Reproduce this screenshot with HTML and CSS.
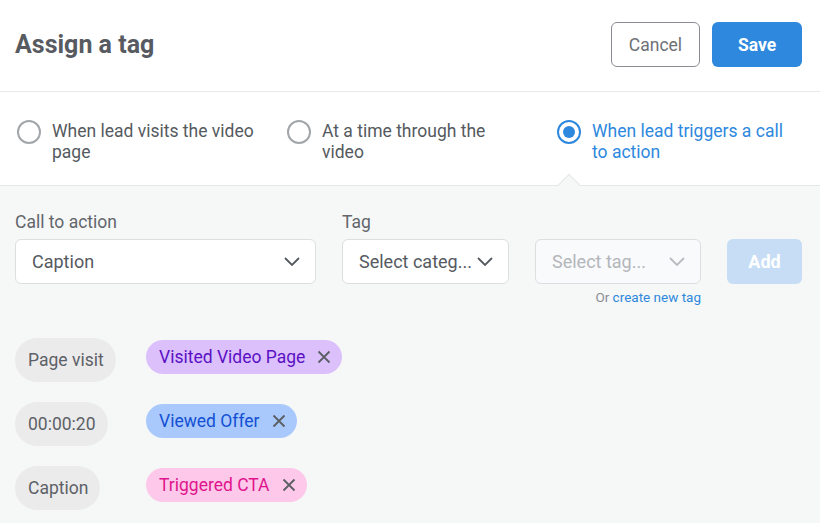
FILE: index.html
```html
<!DOCTYPE html>
<html lang="en">
<head>
  <meta charset="UTF-8" />
  <meta name="viewport" content="width=device-width, initial-scale=1.0" />
  <title>Assign a tag</title>
  <link rel="stylesheet" href="styles.css">
</head>
<body>
  <div class="modal">
    <div class="top">
      <h1>Assign a tag</h1>
      <div class="actions">
        <button class="btn btn-cancel">Cancel</button>
        <button class="btn btn-save">Save</button>
      </div>
    </div>

    <div class="triggers">
      <label class="trigger">
        <span class="radio"></span>
        <span class="trigger-text">When lead visits the video page</span>
      </label>
      <label class="trigger">
        <span class="radio"></span>
        <span class="trigger-text">At a time through the video</span>
      </label>
      <label class="trigger active">
        <span class="radio"></span>
        <span class="trigger-text">When lead triggers a call to action</span>
      </label>
    </div>

    <div class="panel">
      <div class="form-row">
        <div class="field field-cta">
          <div class="label">Call to action</div>
          <div class="select">
            <span>Caption</span>
            <svg width="16" height="9" viewBox="0 0 16 9"><polyline points="1,1 8,8 15,1" /></svg>
          </div>
        </div>
        <div class="field field-cat">
          <div class="label">Tag</div>
          <div class="select">
            <span>Select categ...</span>
            <svg width="16" height="9" viewBox="0 0 16 9"><polyline points="1,1 8,8 15,1" /></svg>
          </div>
        </div>
        <div class="field field-tag">
          <div class="select disabled">
            <span>Select tag...</span>
            <svg width="16" height="9" viewBox="0 0 16 9"><polyline points="1,1 8,8 15,1" /></svg>
          </div>
          <div class="create">Or <a href="#">create new tag</a></div>
        </div>
        <button class="btn btn-add">Add</button>
      </div>

      <div class="rows">
        <div class="row">
          <span class="source">Page visit</span>
          <span class="tag tag-purple">Visited Video Page
            <svg width="14" height="14" viewBox="0 0 14 14"><path d="M1.5 1.5L12.5 12.5M12.5 1.5L1.5 12.5" /></svg>
          </span>
        </div>
        <div class="row">
          <span class="source">00:00:20</span>
          <span class="tag tag-blue">Viewed Offer
            <svg width="14" height="14" viewBox="0 0 14 14"><path d="M1.5 1.5L12.5 12.5M12.5 1.5L1.5 12.5" /></svg>
          </span>
        </div>
        <div class="row">
          <span class="source">Caption</span>
          <span class="tag tag-pink">Triggered CTA
            <svg width="14" height="14" viewBox="0 0 14 14"><path d="M1.5 1.5L12.5 12.5M12.5 1.5L1.5 12.5" /></svg>
          </span>
        </div>
      </div>
    </div>
  </div>
</body>
</html>
```

FILE: styles.css
```css
body {
  margin: 0;
  font-family: Roboto, "Liberation Sans", sans-serif;
  color: #555a60;
  background: #fff;
}
.modal {
  width: 820px;
  height: 523px;
  overflow: hidden;
}
.top {
  display: flex;
  align-items: center;
  justify-content: space-between;
  height: 91px;
  padding: 0 18px 0 15px;
  border-bottom: 1px solid #e8e9ea;
}
.top h1 {
  margin: 0 0 2px;
  font-size: 25px;
  font-weight: 700;
  color: #575b61;
}
.actions {
  display: flex;
  gap: 12px;
  margin-top: -2px;
}
.btn {
  height: 45px;
  border-radius: 6px;
  font-family: inherit;
  font-size: 17.5px;
  cursor: pointer;
}
.btn-cancel {
  width: 89px;
  background: #fff;
  border: 1px solid #8a8e93;
  color: #6d7076;
}
.btn-save {
  width: 90px;
  background: #2e88de;
  border: none;
  color: #fff;
  font-weight: 700;
}
.triggers {
  display: flex;
  height: 93px;
  padding-left: 15px;
  overflow: hidden;
}
.trigger {
  flex: none;
  display: flex;
  align-items: flex-start;
  gap: 11px;
  width: 270px;
  padding-top: 29px;
  box-sizing: border-box;
  font-size: 17.5px;
  line-height: 21px;
  color: #555a60;
}
.trigger-text {
  max-width: 205px;
}
.trigger .radio {
  flex: none;
  width: 20px;
  height: 20px;
  margin: -1px 0 0 2px;
  border: 2px solid #a2a5a9;
  border-radius: 50%;
  position: relative;
}
.trigger.active {
  color: #2e88de;
}
.trigger.active .radio {
  border-color: #2e88de;
}
.trigger.active .radio::after {
  content: "";
  position: absolute;
  top: 4px;
  left: 4px;
  width: 12px;
  height: 12px;
  border-radius: 50%;
  background: #2e88de;
}
.panel {
  position: relative;
  background: #f6f7f7;
  border-top: 1px solid #e6e7e8;
  height: 340px;
  padding: 26px 18px 0 15px;
}
.panel::before {
  content: "";
  position: absolute;
  top: -9px;
  left: 561px;
  width: 15px;
  height: 15px;
  background: #f6f7f7;
  border-top: 1px solid #e6e7e8;
  border-left: 1px solid #e6e7e8;
  transform: rotate(45deg);
}
.form-row {
  display: flex;
  align-items: flex-end;
  gap: 26px;
}
.label {
  font-size: 17.5px;
  line-height: 20px;
  margin-bottom: 7px;
  color: #62666c;
}
.select {
  display: flex;
  align-items: center;
  justify-content: space-between;
  height: 45px;
  box-sizing: border-box;
  padding: 0 15px 0 16px;
  background: #fff;
  border: 1px solid #dcdee0;
  border-radius: 6px;
  font-size: 18px;
  color: #555a60;
}
.select svg polyline {
  fill: none;
  stroke: #555a60;
  stroke-width: 1.8;
}
.select.disabled {
  background: #f9fafc;
  color: #b3b6ba;
}
.select.disabled svg polyline {
  stroke: #b8bbbf;
}
.field-cta {
  width: 301px;
}
.field-cat {
  width: 167px;
}
.field-tag {
  width: 166px;
  position: relative;
}
.create {
  position: absolute;
  right: 0;
  top: 50px;
  font-size: 13.5px;
  white-space: nowrap;
  color: #8a8e93;
}
.create a {
  color: #2e88de;
  text-decoration: none;
}
.btn-add {
  width: 75px;
  height: 45px;
  background: #c6ddf5;
  border: none;
  color: #fff;
  font-weight: 700;
  font-size: 18px;
}
.rows {
  display: flex;
  flex-direction: column;
  gap: 20px;
  margin-top: 54px;
}
.row {
  display: grid;
  grid-template-columns: 131px auto;
  justify-content: start;
  align-items: start;
}
.source {
  justify-self: start;
  display: inline-flex;
  align-items: center;
  height: 44px;
  padding: 0 12px 0 13px;
  border-radius: 22px;
  background: #ebebec;
  font-size: 17.5px;
  color: #5d6167;
}
.tag {
  display: inline-flex;
  align-items: center;
  gap: 12px;
  height: 34px;
  margin-top: 2px;
  padding: 0 11px 0 13px;
  border-radius: 17px;
  font-size: 17.5px;
}
.tag svg path {
  stroke: #5b5e63;
  stroke-width: 1.8;
}
.tag-purple {
  background: #dcc0fc;
  color: #5a10c4;
}
.tag-blue {
  background: #a9c9fc;
  color: #1450d4;
}
.tag-pink {
  background: #fdc8e9;
  color: #e0148c;
}
```
